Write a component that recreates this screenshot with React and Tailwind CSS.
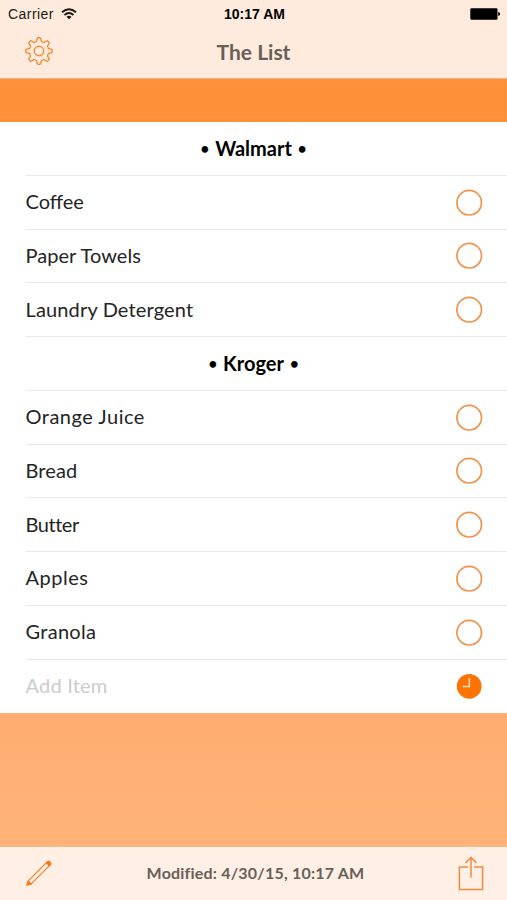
const rows = [
  { type: 'store', name: 'Walmart' },
  { type: 'item', name: 'Coffee', spacing: 'tracking-[0px]' },
  { type: 'item', name: 'Paper Towels', spacing: 'tracking-[0.05px]' },
  { type: 'item', name: 'Laundry Detergent', spacing: 'tracking-[0.15px]' },
  { type: 'store', name: 'Kroger' },
  { type: 'item', name: 'Orange Juice', spacing: 'tracking-[0.5px]' },
  { type: 'item', name: 'Bread', spacing: 'tracking-[0.1px]' },
  { type: 'item', name: 'Butter', spacing: 'tracking-[-0.45px]' },
  { type: 'item', name: 'Apples', spacing: 'tracking-[0.5px]' },
  { type: 'item', name: 'Granola', spacing: 'tracking-[0.3px]' },
];

const teeth = [0, 45, 90, 135, 180, 225, 270, 315];

function GearIcon() {
  return (
    <svg width="30" height="30" viewBox="-15 -15 30 30" fill="none" stroke="#f58a35" strokeWidth="1.4">
      {teeth.map(a => (
        <path
          key={a}
          transform={`rotate(${a})`}
          d="M-3.64 -8.78C-2.7 -9.2 -2.3 -9.7 -2.2 -10.5L-1.9 -12.2Q-1.7 -13.2 -0.8 -13.2H0.8Q1.7 -13.2 1.9 -12.2L2.2 -10.5C2.3 -9.7 2.7 -9.2 3.64 -8.78"
        />
      ))}
      <circle r="4.7" />
    </svg>
  );
}

function WifiIcon() {
  return (
    <svg width="16" height="12" viewBox="0 0 16 12" fill="none" stroke="#1c1814" strokeWidth="1.9">
      <path d="M1 4.3Q8 -1.7 15 4.3" />
      <path d="M3.5 7Q8 3.2 12.5 7" />
      <path d="M8 11.2L5.5 8.7Q8 6.8 10.5 8.7Z" fill="#1c1814" stroke="none" />
    </svg>
  );
}

function BatteryIcon() {
  return (
    <svg width="31" height="12" viewBox="0 0 31 12">
      <rect x="0.3" y="0.3" width="27.2" height="11.4" rx="1.2" />
      <path d="M28.2 4Q30.2 4.4 30.2 6T28.2 8Z" />
    </svg>
  );
}

function PencilIcon() {
  return (
    <svg width="28" height="28" viewBox="0 0 28 28" fill="none" stroke="#f47b20" strokeWidth="1.2" strokeLinejoin="round">
      <path d="M2 26L3.3 21.9L22 3.2Q23.4 1.8 25 3.2Q26.4 4.8 25 6.2L6.2 24.9Z" />
      <path d="M2 26L3.3 21.9L6.2 24.9Z" fill="#f47b20" />
      <path d="M21.4 3.8L22.2 3Q23.5 1.8 25 3.2Q26.4 4.8 25.2 6L24.3 6.9Z" fill="#f47b20" />
    </svg>
  );
}

function ShareIcon() {
  return (
    <svg width="26" height="36" viewBox="0 0 26 36" fill="none" stroke="#f28b3c" strokeWidth="1.5">
      <path d="M10 12H1.4V34.4H24.6V12H16" />
      <path d="M13 22.5V2.4" />
      <path d="M7.6 8L13 2.4L18.4 8" />
    </svg>
  );
}

function Circle() {
  return (
    <svg width="27" height="27" viewBox="0 0 27 27" fill="none">
      <circle cx="13.2" cy="13.7" r="12.3" stroke="#f3924b" strokeWidth="1.7" />
    </svg>
  );
}

function ClockIcon() {
  return (
    <svg width="27" height="27" viewBox="0 0 27 27">
      <circle cx="13.2" cy="13.3" r="12.4" fill="#ff7300" />
      <path d="M13.4 5V13.5H6.8" fill="none" stroke="#ffe3cb" strokeWidth="1.4" />
    </svg>
  );
}

export default function App() {
  return (
    <div className="w-[507px] h-[900px] flex flex-col overflow-hidden bg-white font-['Lato',sans-serif]">
      <header className="h-[79px] shrink-0 bg-[#ffebdd] border-b border-[#e5b48e]">
        {/* Status bar */}
        <div className="h-7 grid grid-cols-3 items-center pl-2 pr-[6px] font-['Liberation_Sans',sans-serif] text-sm text-[#1c1814]">
          <div className="flex items-center gap-[7px]">
            <span className="tracking-[0.45px]">Carrier</span>
            <WifiIcon />
          </div>
          <div className="text-center font-bold text-sm text-black">10:17 AM</div>
          <div className="flex justify-end"><BatteryIcon /></div>
        </div>
        {/* Nav bar */}
        <div className="h-12 grid grid-cols-3 items-center px-6 pb-[2px]">
          <GearIcon />
          <h1 className="text-center text-[21px] font-bold text-[#685f58] pt-[2px]">The List</h1>
        </div>
      </header>

      <div className="h-[43px] shrink-0 bg-[#ff913b]" />

      <main className="shrink-0 bg-white">
        {rows.map(r => r.type === 'store' ? (
          <div key={r.name} className="h-[53.75px] pl-[26px]">
            <div className="h-full flex items-center justify-center gap-[6px] border-b border-[#e8e8e8] pr-[26px] text-[20px] font-bold text-black">
              <span className="text-[15px]">•</span>
              <h2>{r.name}</h2>
              <span className="text-[15px]">•</span>
            </div>
          </div>
        ) : (
          <div key={r.name} className="h-[53.75px] pl-[26px]">
            <div className="h-full flex items-center justify-between border-b border-[#e8e8e8] pr-[24px]">
              <span className={`pb-[2px] -ml-[0.5px] text-[20px] text-[#242424] ${r.spacing}`}>{r.name}</span>
              <Circle />
            </div>
          </div>
        ))}
        <div className="h-[53.5px] flex items-center justify-between pl-[26px] pr-[24px]">
          <span className="pb-[2px] -ml-[0.5px] text-[20px] text-[#cccccc] tracking-[0.2px]">Add Item</span>
          <ClockIcon />
        </div>
      </main>

      <div className="flex-1 bg-gradient-to-b from-[#ffad70] to-[#ffb379]" />

      <footer className="h-[54px] shrink-0 flex items-center justify-between bg-[#ffefe4] border-t border-[#e9b992] pl-[25px] pr-[23px] pb-[2px]">
        <PencilIcon />
        <p className="text-[16px] font-bold text-[#685f58] tracking-[0.2px]">Modified: 4/30/15, 10:17 AM</p>
        <ShareIcon />
      </footer>
    </div>
  );
}
